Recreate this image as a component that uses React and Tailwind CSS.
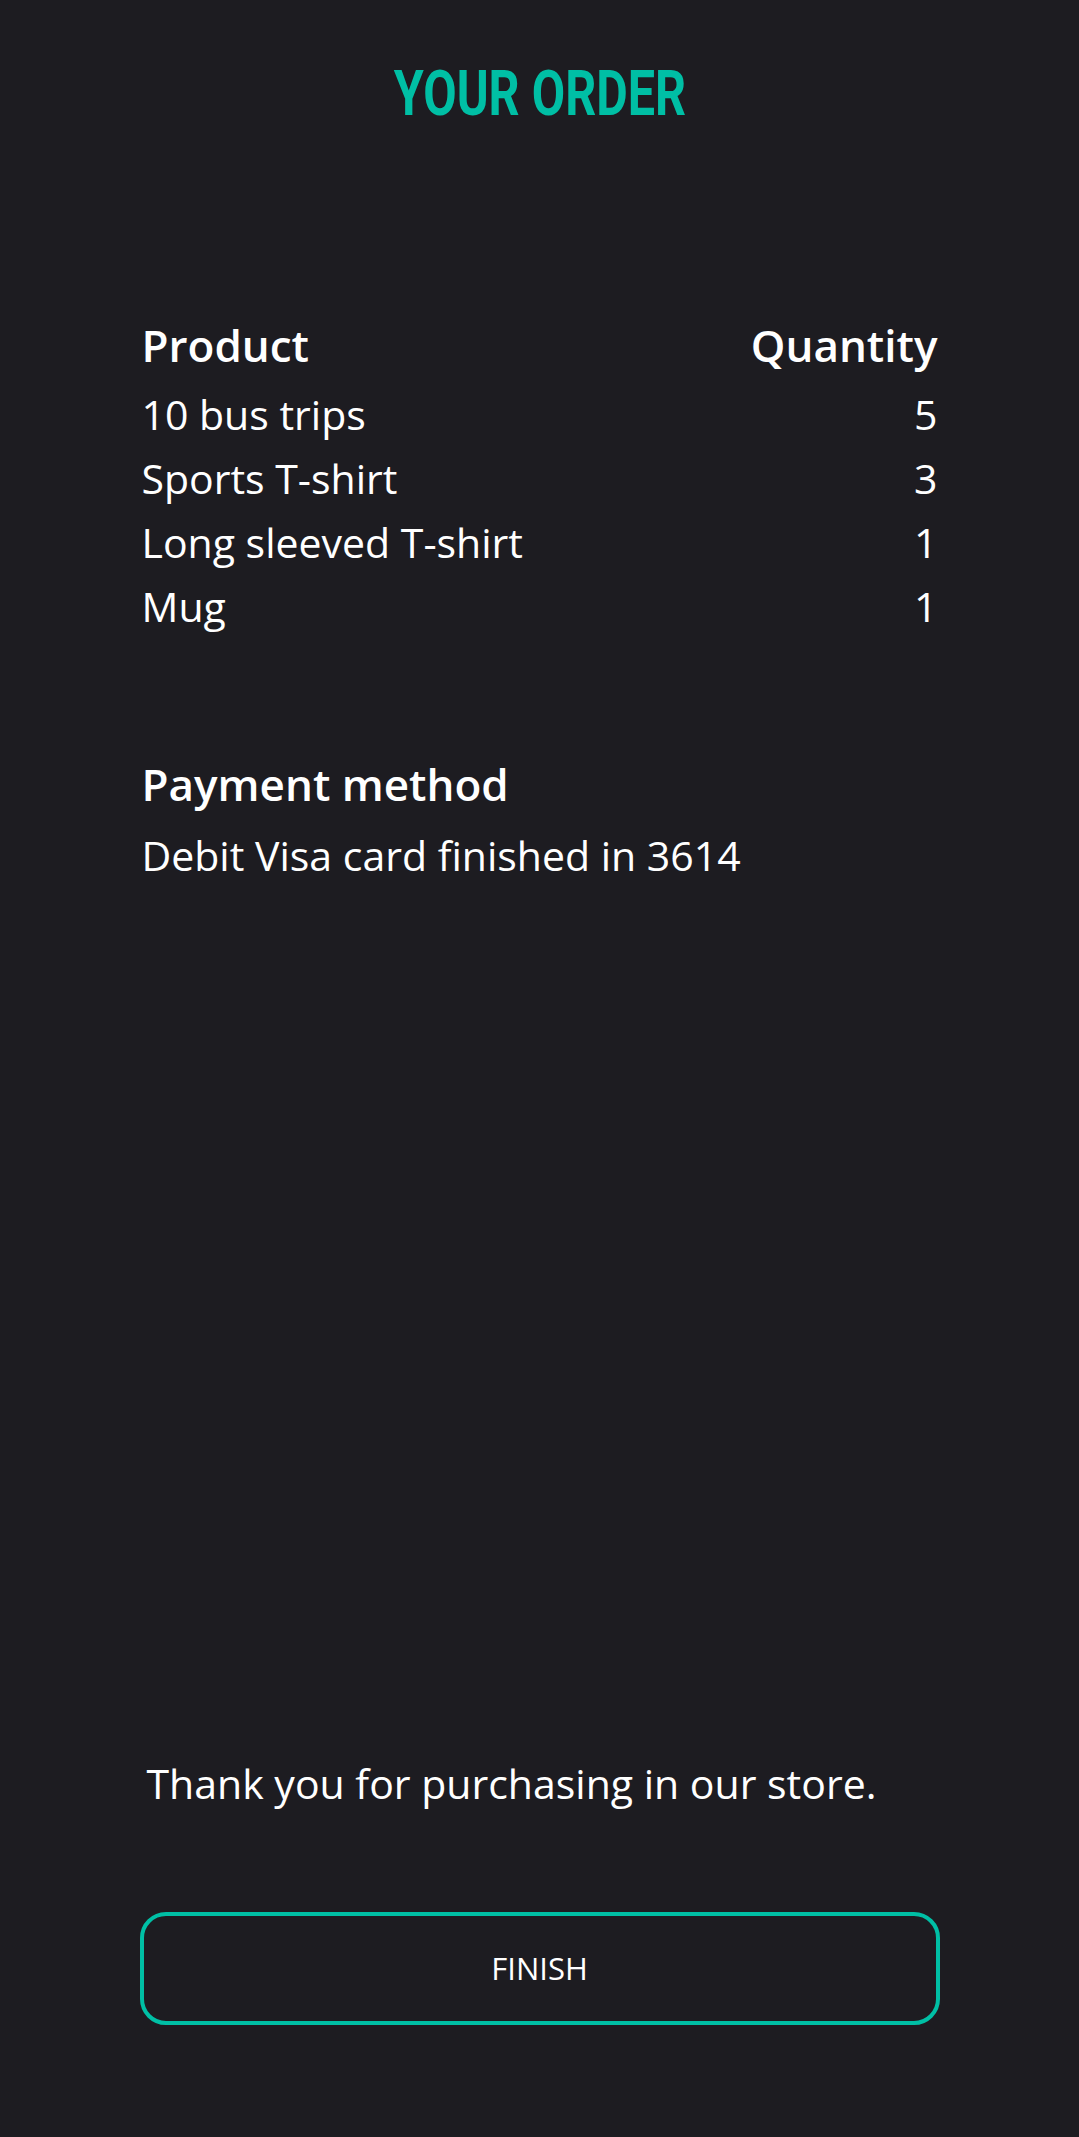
import React from 'react';

const items = [
  { name: '10 bus trips', qty: 5 },
  { name: 'Sports T-shirt', qty: 3 },
  { name: 'Long sleeved T-shirt', qty: 1 },
  { name: 'Mug', qty: 1 },
];

const App = () => {
  return (
    <div className="min-h-screen bg-[#1d1c21] text-white font-['Open_Sans','Noto_Sans',sans-serif]">
      <div className="w-[800px] mx-auto pt-[62px] pb-[112px]">
        <h1 className="text-center text-[63px] leading-[63px] font-bold text-[#00bfa5] font-['Roboto',sans-serif] scale-x-[0.77]">
          YOUR ORDER
        </h1>

        {/* Order table */}
        <div className="px-[2px] mt-[186px]">
          <div className="flex justify-between text-[44px] leading-[68px] font-semibold">
            <span>Product</span>
            <span>Quantity</span>
          </div>
          <div className="mt-[3px]">
            {items.map((item) => (
              <div key={item.name} className="flex justify-between text-[41px] leading-[64px]">
                <span>{item.name}</span>
                <span>{item.qty}</span>
              </div>
            ))}
          </div>
        </div>

        {/* Payment */}
        <div className="px-[2px] mt-[112px]">
          <h2 className="text-[44px] leading-[68px] font-semibold">Payment method</h2>
          <p className="mt-[5px] text-[41px] leading-[64px]">Debit Visa card finished in 3614</p>
        </div>

        <p className="mt-[864px] pl-[7px] text-[41px] leading-[64px]">
          Thank you for purchasing in our store.
        </p>

        <button className="mt-[97px] w-full h-[113px] border-4 border-[#00bfa5] rounded-[26px] text-[31px] text-white">
          FINISH
        </button>
      </div>
    </div>
  );
};

export default App;
